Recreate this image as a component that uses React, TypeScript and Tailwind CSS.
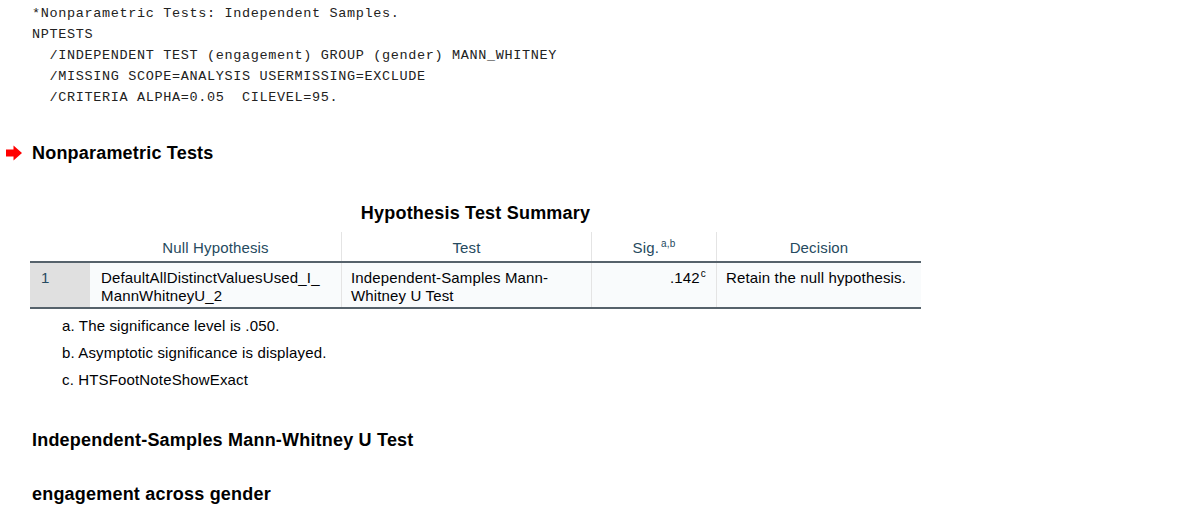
import React from "react";

const mono = { fontFamily: '"Liberation Mono", "DejaVu Sans Mono", monospace' };

export default function App() {
  return (
    <div
      className="w-[1183px] h-[523px] bg-white overflow-hidden text-black"
      style={{ fontFamily: '"Liberation Sans", Arial, sans-serif' }}
    >
      {/* syntax block */}
      <div
        className="pt-[3px] pl-[32px] text-[13.5px] tracking-[0.65px] leading-[21px] text-[#222] whitespace-pre"
        style={mono}
      >
        <div>*Nonparametric Tests: Independent Samples.</div>
        <div>NPTESTS</div>
        <div>  /INDEPENDENT TEST (engagement) GROUP (gender) MANN_WHITNEY</div>
        <div>  /MISSING SCOPE=ANALYSIS USERMISSING=EXCLUDE</div>
        <div>  /CRITERIA ALPHA=0.05  CILEVEL=95.</div>
      </div>

      {/* heading */}
      <div className="mt-[33px] flex items-center pl-[6px] h-[24px]">
        <svg width="16" height="16" viewBox="0 0 16 16" className="shrink-0 -mt-[1px]">
          <path d="M0 4.5 H7.5 V0.5 L16 8 L7.5 15.5 V11.5 H0 Z" fill="#ff0000" />
        </svg>
        <div className="ml-[10px] text-[18px] font-bold leading-[24px] tracking-[0.2px]">Nonparametric Tests</div>
      </div>

      {/* table */}
      <div className="ml-[30px] w-[891px] mt-[36px]">
        <div className="text-center text-[18px] font-bold leading-[24px] tracking-[0.2px]">Hypothesis Test Summary</div>
        <div className="mt-[7px] grid grid-cols-[60px_251px_250px_125px_205px] text-[15px] tracking-[0.15px]">
          {/* header row */}
          <div className="h-[29px]" />
          <div className="h-[29px] pt-[3px] flex items-center justify-center text-[#264a60]">Null Hypothesis</div>
          <div className="h-[29px] pt-[3px] flex items-center justify-center text-[#264a60] border-l border-[#e4e4e4]">Test</div>
          <div className="h-[29px] pt-[3px] flex items-center justify-center text-[#264a60] border-l border-[#e4e4e4]">
            <span>
              Sig.<sup className="text-[10px] ml-[2px] relative -top-[6px]">a,b</sup>
            </span>
          </div>
          <div className="h-[29px] pt-[3px] flex items-center justify-center text-[#264a60] border-l border-[#e4e4e4]">Decision</div>
        </div>
        <div className="grid grid-cols-[60px_251px_250px_125px_205px] text-[15px] tracking-[0.15px] leading-[18px] border-y-2 border-[#56626b] bg-[#f9fbfc]">
          <div className="bg-[#e0e0e0] pl-[11px] pt-[6px] h-[44px] text-[#264a60]">1</div>
          <div className="pl-[11px] pt-[6px] text-[#010205]">
            DefaultAllDistinctValuesUsed_I_
            <br />
            MannWhitneyU_2
          </div>
          <div className="pl-[9px] pt-[6px] border-l border-[#e4e4e4] text-[#010205]">
            Independent-Samples Mann-
            <br />
            Whitney U Test
          </div>
          <div className="pr-[10px] pt-[6px] text-right border-l border-[#e4e4e4] text-[#010205]">
            .142<sup className="text-[10px] ml-[1px] relative -top-[6px]">c</sup>
          </div>
          <div className="pl-[9px] pt-[6px] border-l border-[#e4e4e4] text-[#010205]">Retain the null hypothesis.</div>
        </div>
      </div>

      {/* footnotes */}
      <div className="mt-[3px] pl-[62px] text-[15px] tracking-[0.15px] leading-[27px] text-[#010205]">
        <div>a. The significance level is .050.</div>
        <div>b. Asymptotic significance is displayed.</div>
        <div>c. HTSFootNoteShowExact</div>
      </div>

      <div className="mt-[35px] pl-[32px] text-[18px] font-bold leading-[24px] tracking-[0.2px]">
        Independent-Samples Mann-Whitney U Test
      </div>
      <div className="mt-[30px] pl-[32px] text-[18px] font-bold leading-[24px] tracking-[0.2px]">engagement across gender</div>
    </div>
  );
}
